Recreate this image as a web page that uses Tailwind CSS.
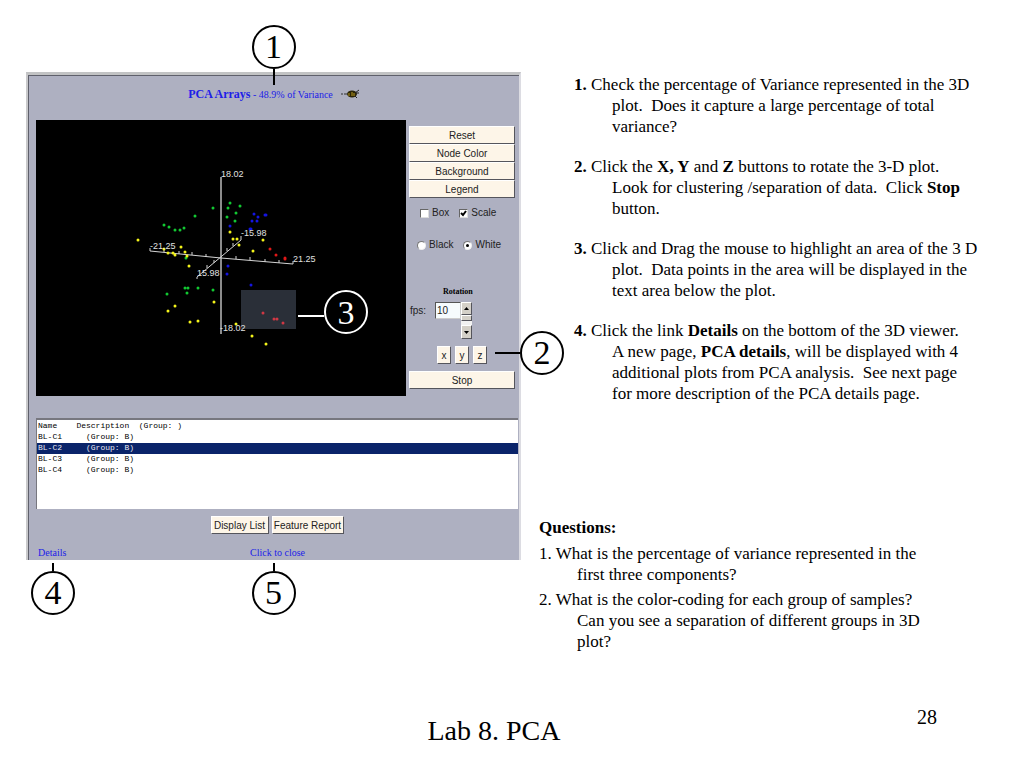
<!DOCTYPE html>
<html lang="en">
  <head>
    <meta charset="UTF-8" />
    <meta name="viewport" content="width=device-width, initial-scale=1.0" />
    <title>Lab 8. PCA</title>
    <script src="https://cdn.jsdelivr.net/npm/@tailwindcss/browser@4"></script>
  </head>
  <body
    class="flex min-h-screen flex-col bg-white font-['Liberation_Serif',serif] text-black"
  >
    <main
      class="grid grow grid-cols-[minmax(0,539fr)_minmax(0,485fr)] items-start pt-[72px]"
    >
      <!-- 3D viewer -->
      <div class="pr-[18px] pl-[26px]">
        <section
          class="relative border-t-[3px] border-r-2 border-l-2 border-t-[#c2c3c4] border-r-[#dcdce2] border-l-[#c9c9cb] bg-[#aeb0c1]"
        >
          <div class="border-t border-l border-[#5f606b]">
            <h1
              class="flex h-[44px] items-center justify-center gap-[3px] pb-[8px] text-[10px] text-[#2020e8]"
            >
              <span><b class="text-[12px]">PCA Arrays</b> - 48.9% of Variance</span>
              <svg class="ml-1 h-[10px] w-[20px]" viewBox="0 0 20 10">
                <path d="M1 5h2M4 5h3" stroke="#333" />
                <ellipse cx="12" cy="5" rx="5" ry="3.500" fill="#2a2408" />
                <path
                  d="M9 4v3M12 3v4M14 4v3"
                  stroke="#b99a20"
                  stroke-width="1"
                />
                <path
                  d="M15 4l4-3M15 7l2 2M16 4h3"
                  stroke="#222"
                  fill="none"
                />
              </svg>
            </h1>

            <div class="flex pr-1 pl-[7px]">
              <!-- Plot -->
              <svg
                class="h-[276px] min-w-0 flex-1 bg-black"
                viewBox="36 120 370 276"
                preserveAspectRatio="xMinYMin meet"
              >
                <rect x="241" y="290" width="55" height="39" fill="#2a2f38" />
                <path d="M221 177v157" stroke="#8c8c8c" stroke-width="2" />
                <path
                  d="M150 248v3L221 258L293 264v-3M241 236v4L197 277v2M164 249v3M179 251v3M192 252v3M206 254v3M236 256v3M250 257v3M265 259v3M279 260v3M227 248v3M233 243v3M214 260v3M207 265v3"
                  stroke="#d4d4d4"
                  fill="none"
                />
                <g fill="none" stroke-width="3" stroke-linecap="round">
                  <path
                    stroke="#12c832"
                    d="M164 225h0M169 227h0M175 230h0M180 230h0M184 228h0M195 216h0M213 208h0M230 203h0M228 208h0M240 206h0M236 213h0M227 217h0M235 221h0M186 258h0M185 288h0M188 288h0M198 288h0M187 293h0M167 294h0M213 290h0"
                  />
                  <path
                    stroke="#f4f41a"
                    d="M138 240h0M181 247h0M164 249h0M168 253h0M173 253h0M175 255h0M185 252h0M187 256h0M189 266h0M230 232h0M233 239h0M237 239h0M239 245h0M263 240h0M253 251h0M175 306h0M168 311h0M190 322h0M198 321h0M214 302h0M236 324h0M252 336h0M266 344h0"
                  />
                  <path
                    stroke="#1414e0"
                    d="M254 214h0M258 217h0M265 215h1M252 221h0M257 221h0M230 226h0M250 229h1M228 266h0M227 274h0M251 285h0"
                  />
                  <path stroke="#e01818" d="M270 249h0M276 255h0M285 258v1" />
                  <path
                    stroke="#d03844"
                    d="M263 313h0M274 319h0M277 319h0M283 323h0"
                  />
                </g>
                <g
                  fill="#e0e0e0"
                  font-family="Liberation Sans, sans-serif"
                  font-size="9"
                >
                  <text x="221" y="177">18.02</text>
                  <text x="150" y="249">-21.25</text>
                  <text x="241" y="236">-15.98</text>
                  <text x="293" y="262">21.25</text>
                  <text x="197" y="276">15.98</text>
                  <text x="220" y="331">-18.02</text>
                </g>
                <path d="M298 316h26" stroke="#fff" stroke-width="2" />
                <circle
                  cx="346"
                  cy="312"
                  r="21"
                  fill="#000"
                  stroke="#fff"
                  stroke-width="2"
                />
                <text
                  x="346"
                  y="324"
                  fill="#fff"
                  font-size="34"
                  text-anchor="middle"
                >
                  3
                </text>
              </svg>

              <!-- Controls -->
              <div
                class="ml-[3px] flex w-[106px] flex-col pt-[6px] font-['Liberation_Sans',sans-serif] text-[10px] leading-[12px] text-[#222]"
              >
                <button
                  class="h-[18px] border border-t-white border-r-[#55555c] border-b-[#55555c] border-l-white bg-[#fdf5e8] pt-px"
                >
                  Reset
                </button>
                <button
                  class="h-[18px] border border-t-white border-r-[#55555c] border-b-[#55555c] border-l-white bg-[#fdf5e8] pt-px"
                >
                  Node Color
                </button>
                <button
                  class="h-[18px] border border-t-white border-r-[#55555c] border-b-[#55555c] border-l-white bg-[#fdf5e8] pt-px"
                >
                  Background
                </button>
                <button
                  class="h-[18px] border border-t-white border-r-[#55555c] border-b-[#55555c] border-l-white bg-[#fdf5e8] pt-px"
                >
                  Legend
                </button>

                <div class="mt-[9px] flex gap-[10px] pl-[11px]">
                  <label class="flex items-center gap-[3px]">
                    <input
                      type="checkbox"
                      class="size-[9px] appearance-none border border-t-[#666] border-r-[#ddd] border-b-[#ddd] border-l-[#666] bg-white"
                    />
                    Box
                  </label>
                  <label class="relative flex items-center gap-[3px]">
                    <input
                      type="checkbox"
                      checked
                      class="size-[9px] appearance-none border border-t-[#666] border-r-[#ddd] border-b-[#ddd] border-l-[#666] bg-white"
                    />
                    <svg
                      class="pointer-events-none absolute left-0 size-[9px]"
                      viewBox="0 0 9 9"
                    >
                      <path
                        d="M2 4l2 2l3-4"
                        fill="none"
                        stroke="#000"
                        stroke-width="2"
                      />
                    </svg>
                    Scale
                  </label>
                </div>

                <div class="mt-[20px] flex gap-[10px] pl-[8px]">
                  <label class="flex items-center gap-[3px]">
                    <input
                      type="radio"
                      name="tone"
                      class="size-[9px] appearance-none rounded-full border border-t-[#777] border-r-[#eee] border-b-[#eee] border-l-[#777] bg-white"
                    />
                    Black
                  </label>
                  <label class="relative flex items-center gap-[3px]">
                    <input
                      type="radio"
                      name="tone"
                      checked
                      class="size-[9px] appearance-none rounded-full border border-t-[#777] border-r-[#eee] border-b-[#eee] border-l-[#777] bg-white"
                    />
                    <span
                      class="pointer-events-none absolute left-[3px] size-[3px] rounded-full bg-black"
                    ></span>
                    White
                  </label>
                </div>

                <h2
                  class="mt-[35px] pl-[34px] font-['Liberation_Serif',serif] text-[8px] leading-[12px] font-bold text-black"
                >
                  Rotation
                </h2>

                <div class="mt-[4px] flex items-start pl-px">
                  <label for="fps" class="w-[25px] pt-[3px]">fps:</label>
                  <input
                    id="fps"
                    value="10"
                    class="h-[17px] w-[26px] border border-t-[#555] border-r-[#ccc] border-b-[#ccc] border-l-[#555] bg-[#f6fbfd] pl-px"
                  />
                  <div class="flex h-[37px] w-[11px] flex-col bg-[#f2f2f2]">
                    <button
                      aria-label="Faster"
                      class="flex h-[13px] items-center justify-center border border-t-white border-r-[#55555c] border-b-[#55555c] border-l-white bg-[#d4d0c8]"
                    >
                      <svg class="h-[3px] w-[5px]" viewBox="0 0 5 3">
                        <path d="M0 3L2.500 0L5 3z" />
                      </svg>
                    </button>
                    <div
                      class="h-[6px] border border-t-white border-r-[#55555c] border-b-[#55555c] border-l-white bg-[#d4d0c8]"
                    ></div>
                    <button
                      aria-label="Slower"
                      class="mt-auto flex h-[14px] items-center justify-center border border-t-white border-r-[#55555c] border-b-[#55555c] border-l-white bg-[#d4d0c8]"
                    >
                      <svg class="h-[3px] w-[5px]" viewBox="0 0 5 3">
                        <path d="M0 0h5L2.500 3z" />
                      </svg>
                    </button>
                  </div>
                </div>

                <div class="mt-[7px] flex gap-[4px] pl-[28px]">
                  <button
                    class="h-[18px] w-[14px] border border-t-white border-r-[#55555c] border-b-[#55555c] border-l-white bg-[#fdf5e8] pt-px"
                  >
                    x
                  </button>
                  <button
                    class="h-[18px] w-[14px] border border-t-white border-r-[#55555c] border-b-[#55555c] border-l-white bg-[#fdf5e8] pt-px"
                  >
                    y
                  </button>
                  <button
                    class="h-[18px] w-[14px] border border-t-white border-r-[#55555c] border-b-[#55555c] border-l-white bg-[#fdf5e8] pt-px"
                  >
                    z
                  </button>
                </div>
                <button
                  class="mt-[7px] h-[18px] border border-t-white border-r-[#55555c] border-b-[#55555c] border-l-white bg-[#fdf5e8] pt-px"
                >
                  Stop
                </button>
              </div>
            </div>

            <!-- Sample list -->
            <div class="mt-[22px] pr-px pl-[7px]">
              <select
                size="8"
                aria-label="Samples"
                class="block h-[91px] w-full appearance-none overflow-hidden border-t-2 border-l border-[#77777f] bg-white pt-px pl-0 font-['Liberation_Mono',monospace] text-[8px] leading-[11px] text-black"
              >
                <option class="h-[11px] min-h-0 px-px py-0 whitespace-pre">Name&nbsp;&nbsp;&nbsp;&nbsp;Description&nbsp;&nbsp;(Group: )</option>
                <option class="h-[11px] min-h-0 px-px py-0 whitespace-pre">BL-C1&nbsp;&nbsp;&nbsp;&nbsp;&nbsp;(Group: B)</option>
                <option
                  selected
                  class="h-[11px] min-h-0 bg-[linear-gradient(#0a246a,#0a246a)] px-px py-0 whitespace-pre [-webkit-text-fill-color:#e8e8f0]"
                >BL-C2&nbsp;&nbsp;&nbsp;&nbsp;&nbsp;(Group: B)</option>
                <option class="h-[11px] min-h-0 px-px py-0 whitespace-pre">BL-C3&nbsp;&nbsp;&nbsp;&nbsp;&nbsp;(Group: B)</option>
                <option class="h-[11px] min-h-0 px-px py-0 whitespace-pre">BL-C4&nbsp;&nbsp;&nbsp;&nbsp;&nbsp;(Group: B)</option>
              </select>
            </div>

            <div
              class="mt-[7px] flex justify-center gap-[3px] pr-[4px] pl-[10px] font-['Liberation_Sans',sans-serif] text-[10px] leading-[12px] text-[#222]"
            >
              <button
                class="h-[18px] w-[58px] border border-t-white border-r-[#55555c] border-b-[#55555c] border-l-white bg-[#fdf5e8] pt-px whitespace-nowrap"
              >
                Display List
              </button>
              <button
                class="h-[18px] w-[72px] border border-t-white border-r-[#55555c] border-b-[#55555c] border-l-white bg-[#fdf5e8] pt-px whitespace-nowrap"
              >
                Feature Report
              </button>
            </div>

            <div
              class="mt-[12px] grid grid-cols-[1fr_auto_1fr] pr-[2px] pb-px pl-[9px] text-[10px] leading-[13px] text-[#2020e8]"
            >
              <a href="#details">Details</a>
              <a href="#close">Click to close</a>
            </div>
          </div>

          <!-- Callouts over the viewer -->
          <div
            class="absolute top-[-50px] left-1/2 flex -translate-x-1/2 flex-col items-center"
          >
            <span
              class="flex size-[44px] items-center justify-center rounded-full border-2 bg-white text-[34px] leading-none"
              >1</span
            >
            <span class="h-[16px] w-[2px] bg-black"></span>
          </div>
          <div class="absolute top-[256px] right-[-45px] flex items-center">
            <span class="h-[2px] w-[25px] bg-black"></span>
            <span
              class="flex size-[44px] items-center justify-center rounded-full border-2 bg-white text-[34px] leading-none"
              >2</span
            >
          </div>
          <div
            class="absolute top-full left-[3px] mt-[3px] flex flex-col items-center"
          >
            <span class="h-[8px] w-[2px] bg-black"></span>
            <span
              class="flex size-[44px] items-center justify-center rounded-full border-2 bg-white text-[34px] leading-none"
              >4</span
            >
          </div>
          <div
            class="absolute top-full left-1/2 mt-[3px] flex -translate-x-1/2 flex-col items-center"
          >
            <span class="h-[8px] w-[2px] bg-black"></span>
            <span
              class="flex size-[44px] items-center justify-center rounded-full border-2 bg-white text-[34px] leading-none"
              >5</span
            >
          </div>
        </section>
      </div>

      <!-- Instructions -->
      <div class="pt-[2px] text-[17px] leading-[21px] whitespace-nowrap">
        <ol class="flex flex-col gap-[19px] pl-[35px]">
          <li class="pl-[38px] -indent-[38px]">
            <b>1.</b> Check the percentage of Variance represented in the 3D<br />
            <span class="block indent-0"
              >plot.&nbsp; Does it capture a large percentage of total<br />variance?</span
            >
          </li>
          <li class="pl-[38px] -indent-[38px]">
            <b>2.</b> Click the <b>X, Y</b> and <b>Z</b> buttons to rotate the
            3-D plot.<br />
            <span class="block indent-0"
              >Look for clustering /separation of data.&nbsp; Click
              <b>Stop</b><br />button.</span
            >
          </li>
          <li class="pl-[38px] -indent-[38px]">
            <b>3.</b> Click and Drag the mouse to highlight an area of the 3 D<br />
            <span class="block indent-0"
              >plot.&nbsp; Data points in the area will be displayed in the<br />text
              area below the plot.</span
            >
          </li>
          <li class="pl-[38px] -indent-[38px]">
            <b>4.</b> Click the link <b>Details</b> on the bottom of the 3D
            viewer.<br />
            <span class="block indent-0"
              >A new page, <b>PCA details</b>, will be displayed with 4<br />additional
              plots from PCA analysis.&nbsp; See next page<br />for more
              description of the PCA details page.</span
            >
          </li>
        </ol>

        <h2 class="mt-[113px] font-bold">Questions:</h2>
        <ol class="mt-[5px] flex flex-col gap-[4px]">
          <li class="pl-[38px] -indent-[38px]">
            1. What is the percentage of variance represented in the<br />
            <span class="block indent-0">first three components?</span>
          </li>
          <li class="pl-[38px] -indent-[38px]">
            2. What is the color-coding for each group of samples?<br />
            <span class="block indent-0"
              >Can you see a separation of different groups in 3D<br />plot?</span
            >
          </li>
        </ol>
      </div>
    </main>

    <footer
      class="grid grid-cols-[1fr_auto_1fr] items-start pr-[87px] pb-[21px] pl-[51px]"
    >
      <p class="col-start-2 pt-[10px] text-[28px] leading-[32px]">Lab 8. PCA</p>
      <p class="text-right text-[20px] leading-[24px]">28</p>
    </footer>
  </body>
</html>
